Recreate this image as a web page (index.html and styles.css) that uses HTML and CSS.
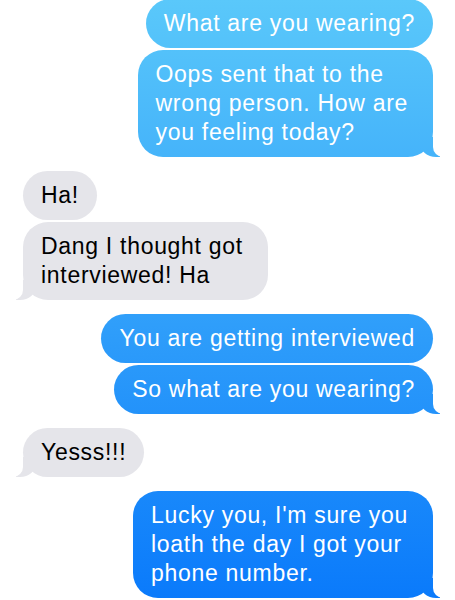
FILE: index.html
```html
<!DOCTYPE html>
<html lang="en">
<head>
  <meta charset="UTF-8">
  <meta name="viewport" content="width=device-width, initial-scale=1.0">
  <title>Messages</title>
  <link rel="stylesheet" href="styles.css">
</head>
<body>
  <div class="thread">
    <div class="group me">
      <div class="bubble">What are you wearing?</div>
      <div class="bubble multi tail">Oops sent that to the<br>wrong person. How are<br>you feeling today?</div>
    </div>

    <div class="group them">
      <div class="bubble">Ha!</div>
      <div class="bubble multi tail">Dang I thought got<br>interviewed! Ha</div>
    </div>

    <div class="group me">
      <div class="bubble">You are getting interviewed</div>
      <div class="bubble tail">So what are you wearing?</div>
    </div>

    <div class="group them">
      <div class="bubble tail">Yesss!!!</div>
    </div>

    <div class="group me">
      <div class="bubble multi tail">Lucky you, I'm sure you<br>loath the day I got your<br>phone number.</div>
    </div>
  </div>
</body>
</html>
```

FILE: styles.css
```css
body {
  margin: 0;
  padding: 0;
  background-color: #fff;
  font-family: 'Liberation Sans', Arial, sans-serif;
  overflow: hidden;
}
.thread {
  display: flex;
  flex-direction: column;
  gap: 14px;
  padding: 0 22px 0 23px;
  margin-top: -1px;
}
.group {
  display: flex;
  flex-direction: column;
  gap: 2px;
}
.group.me {
  align-items: flex-end;
}
.group.them {
  align-items: flex-start;
}
.bubble {
  position: relative;
  padding: 10px 18px;
  font-size: 23px;
  line-height: 29px;
  letter-spacing: 0.7px;
  border-radius: 25px;
  white-space: nowrap;
}
.bubble.multi {
  padding-right: 25px;
}
.me .bubble,
.me .tail::before {
  color: white;
  background: linear-gradient(to bottom, #5ac8fa 0px, #2d9cfa 340px, #0a7afb 600px) fixed;
}
.them .bubble,
.them .tail::before {
  color: #000;
  background-color: #e5e5ea;
}
.tail::before,
.tail::after {
  content: "";
  position: absolute;
  bottom: 0;
  height: 20px;
}
.me .tail::before {
  right: -7px;
  width: 20px;
  border-bottom-left-radius: 16px 14px;
}
.me .tail::after {
  right: -10px;
  width: 10px;
  background-color: #fff;
  border-bottom-left-radius: 10px;
}
.them .tail::before {
  left: -7px;
  width: 20px;
  border-bottom-right-radius: 16px 14px;
}
.them .tail::after {
  left: -10px;
  width: 10px;
  background-color: #fff;
  border-bottom-right-radius: 10px;
}
```
